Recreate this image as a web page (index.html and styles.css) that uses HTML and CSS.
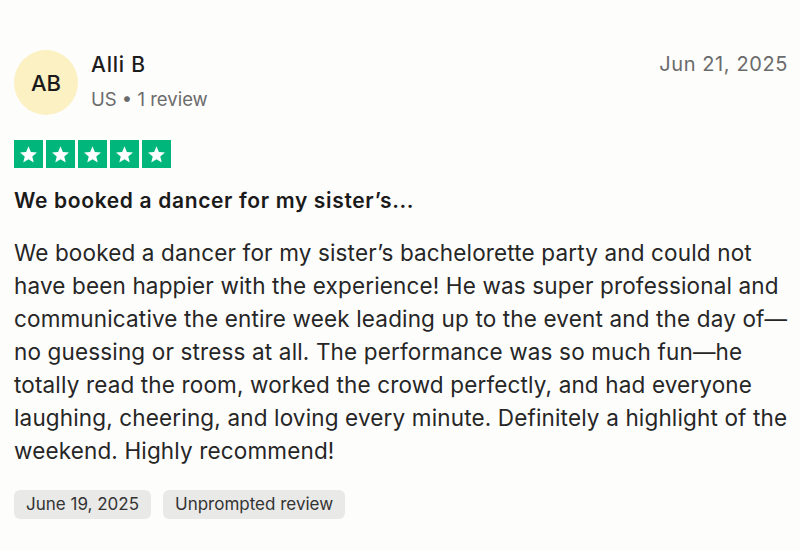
FILE: index.html
```html
<!DOCTYPE html>
<html>
<head>
<meta charset="utf-8">
<link rel="stylesheet" href="styles.css">
</head>
<body>
<article class="review">
  <header class="head">
    <div class="avatar">AB</div>
    <div class="who">
      <div class="name">Alli B</div>
      <div class="meta">US • 1 review</div>
    </div>
    <div class="date">Jun 21, 2025</div>
  </header>
  <div class="stars">
    <span class="star"><svg viewBox="0 0 24 24"><path d="M12 2.6l2.7 6.6 7 .5-5.4 4.5 1.7 6.9L12 17.3l-6 3.8 1.7-6.9-5.4-4.5 7-.5z"/></svg></span>
    <span class="star"><svg viewBox="0 0 24 24"><path d="M12 2.6l2.7 6.6 7 .5-5.4 4.5 1.7 6.9L12 17.3l-6 3.8 1.7-6.9-5.4-4.5 7-.5z"/></svg></span>
    <span class="star"><svg viewBox="0 0 24 24"><path d="M12 2.6l2.7 6.6 7 .5-5.4 4.5 1.7 6.9L12 17.3l-6 3.8 1.7-6.9-5.4-4.5 7-.5z"/></svg></span>
    <span class="star"><svg viewBox="0 0 24 24"><path d="M12 2.6l2.7 6.6 7 .5-5.4 4.5 1.7 6.9L12 17.3l-6 3.8 1.7-6.9-5.4-4.5 7-.5z"/></svg></span>
    <span class="star"><svg viewBox="0 0 24 24"><path d="M12 2.6l2.7 6.6 7 .5-5.4 4.5 1.7 6.9L12 17.3l-6 3.8 1.7-6.9-5.4-4.5 7-.5z"/></svg></span>
  </div>
  <h2 class="title">We booked a dancer for my sister’s...</h2>
  <p class="body">We booked a dancer for my sister’s bachelorette party and could not<br>have been happier with the experience! He was super professional and<br>communicative the entire week leading up to the event and the day of—<br>no guessing or stress at all. The performance was so much fun—he<br>totally read the room, worked the crowd perfectly, and had everyone<br>laughing, cheering, and loving every minute. Definitely a highlight of the<br>weekend. Highly recommend!</p>
  <div class="tags">
    <span class="tag">June 19, 2025</span>
    <span class="tag">Unprompted review</span>
  </div>
</article>
</body>
</html>
```
FILE: styles.css
```css
html, body {
  margin: 0;
  padding: 0;
  background: #fdfdfc;
}
body {
  font-family: Inter, "Liberation Sans", sans-serif;
  color: #1c1c1c;
}
.review {
  padding: 50px 12px 0 14px;
}
.head {
  display: flex;
  align-items: flex-start;
}
.avatar {
  width: 64px;
  height: 65px;
  border-radius: 50%;
  background: #fcf1c3;
  display: flex;
  align-items: center;
  justify-content: center;
  font-size: 22px;
  font-weight: 500;
  color: #1a1a1a;
  flex: none;
}
.who {
  margin-left: 13px;
  margin-top: 2px;
}
.name {
  font-size: 21px;
  font-weight: 500;
  line-height: 26px;
  letter-spacing: 0.8px;
}
.meta {
  font-size: 18.5px;
  color: #6b6b6b;
  margin-top: 10px;
  line-height: 22px;
}
.date {
  margin-left: auto;
  font-size: 20px;
  color: #6b6b6b;
  margin-top: 2px;
  letter-spacing: 0.6px;
}
.stars {
  display: flex;
  gap: 3px;
  margin-top: 25px;
}
.star {
  width: 29px;
  height: 28px;
  background: #00b67a;
  display: flex;
  align-items: center;
  justify-content: center;
}
.star svg {
  width: 21px;
  height: 21px;
  fill: #fff;
}
.title {
  font-size: 21px;
  font-weight: 600;
  margin: 20px 0 0;
  line-height: 26px;
  letter-spacing: 0.65px;
  color: #1a1a1a;
}
.body {
  font-size: 22.5px;
  line-height: 33px;
  margin: 22px 0 0;
  color: #262626;
  white-space: nowrap;
  letter-spacing: 0.15px;
}
.tags {
  display: flex;
  gap: 12px;
  margin-top: 23px;
}
.tag {
  background: #e9e9e7;
  border-radius: 6px;
  padding: 0 12px;
  height: 29px;
  line-height: 29px;
  font-size: 17px;
  color: #333;
}
```
